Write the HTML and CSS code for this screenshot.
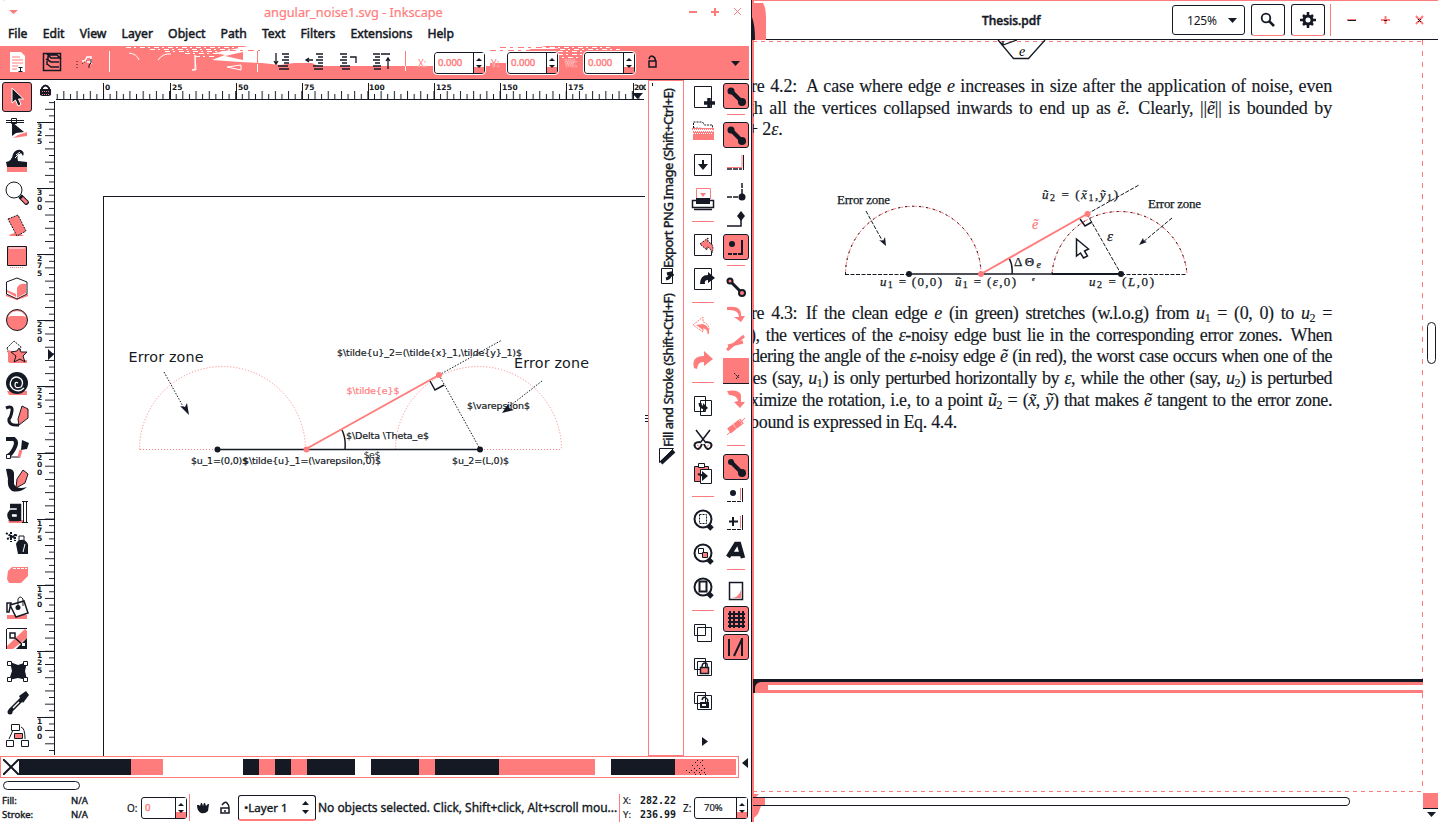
FILE: index.html
```html
<!DOCTYPE html>
<html lang="en">
<head>
<meta charset="utf-8">
<title>Inkscape and Thesis.pdf</title>
<link rel="stylesheet" href="styles.css">
</head>
<body>
<div class="desktop">
<section class="inkscape">
  <header class="titlebar">
    <svg class="tri" width="9" height="5"><path class="p" d="M0 0h9l-4.500 4z"/></svg>
    <span class="title">angular_noise1.svg - Inkscape</span>
    <svg class="winbtns" width="56" height="12"><path class="ps" stroke-width="2" d="M1 6h8M23 6h8M27 2v8"/><path class="ps" d="M46 2l7 7M53 2l-7 7"/></svg>
  </header>
  <nav class="menubar"><span>File</span><span>Edit</span><span>View</span><span>Layer</span><span>Object</span><span>Path</span><span>Text</span><span>Filters</span><span>Extensions</span><span>Help</span></nav>
  <div class="toolbar">
    <svg class="toolbar-art" width="752" height="33" viewBox="0 46 752 33">
      <path class="w" d="M248 46H540L560 49H530V63H490V66H318L312 63H294L280 65L262 63L240 62L212 60L225 55L215 53L230 50z"/>
      <path class="ws" stroke-dasharray="5 3 2 4" d="M126 47.500H248M150 49.500H235M165 51.500H225M185 53.500H220M195 56.500H215M530 51.500H600M530 54.500H585M540 57.500H580M560 49.500H620M550 47.500H610"/>
      <path class="ps" stroke-dasharray="6 4 3 5" d="M230 50.500H260M490 50.500H530M500 47.500H550"/>
      <path class="p" d="M225 56l18-4v8z"/>
      <path class="w" d="M10 52h11l4 4v16H10z"/><path class="ps" d="M12 57h8M12 60h11M12 63h11M12 66h6M12 69h5"/><path class="ds" d="M18.500 67.500h4M20.500 67v4M18.500 71.500h4"/>
      <path class="ds" stroke-width="1.500" d="M43.500 53.500h17v17h-17zM48 55h9l3 3h-9zM46 59l5 3h8M47 64l4 3h8M48 56v4l3 2M47 61v4"/>
      <path class="ws" stroke-width="1.500" d="M82 61h3l2-4h4v5h-4M91 58v6"/><path class="ds" stroke-dasharray="1 2" d="M77 61v9M82 64l5-4"/><path class="ds" d="M89 68v-3l2-2v-4"/>
      <path class="ws" d="M109.500 51v21M129 53q8 1 10 7M158 60q5-7 13-6M195 55v14l-3 1h4zM227 67l14 3v-5z"/>
      <path class="ps" d="M257.500 51v13"/><path class="ws" d="M257.500 64v8"/>
      <path class="ds" stroke-width="1.300" d="M276 53v11m-2-3l2 3 2-3M282 54h7M284 57h5M282 60h7M284 63h5M278 66h10M279 69h10M306 60h7m-4-2l-3 2 3 2M316 54h7M318 57h5M316 60h7M318 63h5M313 66h10M314 69h9M340 54h7M342 57h5M340 60h7M342 63h5M340 66h10M342 69h8M350 57h6v6M373 54h7M375 57h5M373 60h7M375 63h5M373 66h8M374 69h7M381 54h9M388 69V58m-2 3l2-3 2 3"/>
      <path class="ps" d="M405.500 51v15"/><path class="ws" d="M405.500 66v5"/>
      <path class="ds" stroke-width="1.500" d="M649 61h7v6h-7zM649 59q1-4 4-2.500t2 5"/>
      <path class="d" d="M731 61h9l-4.500 5z"/>
    </svg>
    <label class="fld fx">X:</label><span class="spin s1">0.000<i></i></span>
    <label class="fld fy">Y:</label><span class="spin s2">0.000<i></i></span>
    <label class="fld fw">W:</label><span class="spin s3">0.000<i></i></span>
  </div>

  <div class="main">
    <div class="toolbox">
      <b class="on"><svg viewBox="0 0 24 24"><path class="d" stroke="#fff" d="M7 3v15l3.500-3 2.500 6 3-1.500-2.500-5.500h5z"/></svg></b>
      <b><svg viewBox="0 0 24 24"><path class="ds" d="M1 3.500h18M1 5.500h18M6.500 1.500h5v5h-5z"/><path class="p" d="M13 18l9-3v4l-14 2z"/><path class="d" d="M7 5v14l4-3 8-1z"/></svg></b>
      <b><svg viewBox="0 0 24 24"><path class="p" d="M2 18h20v5H2z"/><path class="d" d="M1 13Q7 12 8 5Q11 0 16 1Q20 3 18 7L16 4Q11 6 13 12L22 13v5H2z"/><path class="ws" d="M11 6l4-3M10 9l4-4"/></svg></b>
      <b><svg viewBox="0 0 24 24"><circle class="wf" cx="9" cy="9" r="8"/><path class="ds" stroke-width="5" d="M15 15l8 8"/><path class="ps" stroke-width="3" d="M17 17l5 5"/></svg></b>
      <b><svg viewBox="0 0 24 24"><path class="p" d="M4 22l8-3 7 4H5z"/><path class="pf dots" d="M3 6l10-4 8 16-9 5z"/></svg></b>
      <b><svg viewBox="0 0 24 24"><path class="pf" d="M2.500 2.500h19v19h-19z"/><path class="ws" d="M4 4h16"/><path class="ps" stroke-dasharray="1 1" d="M5 23.500h14"/></svg></b>
      <b><svg viewBox="0 0 24 24"><path class="ps" stroke-width="2" d="M1 19l11 4 11-4"/><path class="wf" d="M1.500 6L12 2l10 4v12l-10 5-10.500-5z"/><path class="p" d="M12 12q2-5 9-4v9l-9 5zM2 14l9 4v3l-9-5z"/></svg></b>
      <b><svg viewBox="0 0 24 24"><circle class="pf" cx="12" cy="12" r="10.500"/><path class="w" d="M3 9Q6 3 12 3t9 6l-3-1H6z"/></svg></b>
      <b><svg viewBox="0 0 24 24"><path class="wf dots" d="M2 8l7-7 7 6-2 7-10 1z"/><path class="p" d="M3 10l10 3 4 7-14 2zM4 20h18v3H4z"/><path class="pf" d="M14 8l2 4 6 0-4 4 2 6-5-3-6 3 2-6-5-4 6-1z"/></svg></b>
      <b><svg viewBox="0 0 24 24"><path class="p" d="M2 19h20v4H4z"/><circle class="d" cx="12" cy="11" r="11"/><path class="ws" stroke-width="1.300" d="M13 11q-3-2-3 2t6 2q3-4 0-8-5-4-9 0-4 6 1 10 6 4 11-1"/></svg></b>
      <b><svg viewBox="0 0 24 24"><path class="ds" stroke-width="3" d="M1 4q7-3 6 3t-3 8q-1 7 10 6"/><path class="pf" d="M17 2l6 3v9l-9 7-1-6z"/></svg></b>
      <b><svg viewBox="0 0 24 24"><path class="ds" stroke-width="4" d="M1 3h8q4 3 0 10t-7 7"/><path class="wf" d="M1.500 18.500h4v4h-4z"/><path class="ds" d="M6 21h9"/><path class="d" d="M17 4l7 3-2 6-6 1z"/><path class="ps" stroke-width="3" d="M14 21l2-7"/></svg></b>
      <b><svg viewBox="0 0 24 24"><path class="d" d="M1 1q7-1 8 4v11q3 6 13 3-7 6-15 4-5-3-4-12z"/><path class="pf" d="M12 11l6-9 5 4-3 9-9 5z"/></svg></b>
      <b><svg viewBox="0 0 24 24"><path class="p" d="M3 20h16v3H4z"/><path class="ds" stroke-width="4.500" d="M5 6h9v15M14 12H6q-3 3 0 7h8"/><path class="ws" stroke-width="4" d="M20 2v20"/><path class="ds" d="M17 1.500h6M17 22.500h6M18.500 2v20M21.500 2v20"/></svg></b>
      <b><svg viewBox="0 0 24 24"><path class="ds" stroke-width="2" stroke-dasharray="2 1" d="M1 2l10 6M2 8l10-4M6 1v10M10 3v7"/><path class="wf" d="M14 5h5v5h-5z"/><path class="d" d="M11 13q2-5 8-4 5 3 4 7v7H13z"/><path class="ws" d="M20 13l-2 8"/></svg></b>
      <b><svg viewBox="0 0 24 24"><path class="p" d="M7 4h16v9l-7 7H4l-2-4 1-8z"/><path class="ws" stroke-dasharray="3 1" d="M8 5.500h14"/></svg></b>
      <b><svg viewBox="0 0 24 24"><path class="p" d="M2 20h20v4H2z"/><path class="wf" stroke-width="1.500" d="M2 8h4l-2 9h-2zM5 10l14-4 4 12-12 4z"/><path class="ds" d="M13 13V4q2-4 5 0v7"/><circle class="d" cx="13" cy="12.500" r="2.500"/></svg></b>
      <b><svg viewBox="0 0 24 24"><path class="ds" d="M1.500 2v20M2 1.500h20"/><path class="p" d="M20 2l2 2v7L8 22H2v-3z"/><path class="d" d="M22 11v11H11z"/><path class="ds" stroke-width="1.500" d="M5 6h5v5H5zM10 11l8 7"/><path class="w" d="M17 16h3v3h-3z"/></svg></b>
      <b><svg viewBox="0 0 24 24"><path class="d" d="M5 3l8 3 9-3-2 9 2 9-9-2-9 2 3-9z"/><path class="wf" d="M2.500 2.500h4v4h-4zM18.500 2.500h4v4h-4zM2.500 18.500h4v4h-4zM18.500 18.500h4v4h-4z"/></svg></b>
      <b><svg viewBox="0 0 24 24"><path class="ds" stroke-width="4.500" d="M5 20L18 7"/><path class="d" d="M14 5l7-5 3 4-6 8z"/><path class="ws" stroke-width="1.500" d="M8 17l6-6"/><circle class="d" cx="5" cy="21" r="2.500"/></svg></b>
      <b><svg viewBox="0 0 24 24"><path class="ds" d="M8 7L4 16M16 4q4 1 4 12"/><path class="wf" d="M6.500 1.500h8v6h-8zM1.500 17.500h7v6h-7zM16.500 17.500h7v6h-7z"/><path class="pf" d="M9.500 10.500h8v5h-8z"/></svg></b>
    </div>

    <svg class="canvas" width="612" height="676" viewBox="36 80 612 676">
      <defs>
        <pattern id="hticks" x="103" y="0" width="13.220" height="20" patternUnits="userSpaceOnUse"><path class="d" d="M0 11h1v9H0zM6.600 14h1v6h-1z"/></pattern>
        <pattern id="vticks" x="0" y="122" width="20" height="13.220" patternUnits="userSpaceOnUse"><path class="d" d="M6 0h9v1H6zM10 6.600h5v1h-5z"/></pattern>
      </defs>
      <path class="d" d="M40 89h11v6l-2 1h-7l-2-1z"/>
      <path class="ds" stroke-width="2" d="M42 90v-2q3.500-5 7 0v2"/><path class="ps" stroke-dasharray="1 1" d="M42 91.500h8M42 94.500h8"/>
      <g transform="translate(0 80)"><rect x="56" y="0" width="588" height="20" fill="url(#hticks)"/></g>
      <g transform="translate(39 0)"><rect x="0" y="102" width="15" height="652" fill="url(#vticks)"/></g>
      <g shape-rendering="crispEdges"><path class="ds" d="M56 99.500h588M54.500 101v654M103.500 83v16M170.500 83v16M236.500 83v16M302.500 83v16M368.500 83v16M434.500 83v16M500.500 83v16M566.500 83v16M633.500 83v16M37 122.500h17M37 188.500h17M37 254.500h17M37 320.500h17M37 386.500h17M37 453.500h17M37 519.500h17M37 585.500h17M37 651.500h17M37 717.500h17M103.500 756V196.500H645"/></g>
      <path class="d" d="M632 93h11l-5.500 6zM48 349v11l6-5.500z"/>
      <g class="rl"><text x="105" y="90">0</text><text x="172" y="90">25</text><text x="238" y="90">50</text><text x="304" y="90">75</text><text x="369" y="90">100</text><text x="436" y="90">125</text><text x="502" y="90">150</text><text x="568" y="90">175</text><text x="634" y="90" textLength="14">200</text></g>
      <path class="w" d="M646 80h2v20h-2z"/>
      <g class="rl"><text x="37 37 37" y="129 136 144">325</text><text x="37 37 37" y="195 202 210">300</text><text x="37 37 37" y="261 268 276">275</text><text x="37 37 37" y="327 334 342">250</text><text x="37 37 37" y="393 400 408">225</text><text x="37 37 37" y="460 467 475">200</text><text x="37 37 37" y="526 533 541">175</text><text x="37 37 37" y="592 599 607">150</text><text x="37 37 37" y="658 665 673">125</text><text x="37 37 37" y="724 731 739">100</text></g>
      <path class="ds" d="M645 415.500h3M645 418.500h3M645 421.500h3"/>
      <g class="ps" stroke-dasharray="1 2"><path d="M139.500 449.500A83 83 0 0 1 305.500 449.500M140 449.500h78M395.500 449.500A83 83 0 0 1 561.500 449.500M481 449.500h81"/></g>
      <path class="ds" stroke-dasharray="1.500 1.500" d="M439 375l63-35M439 375l41 74M164 372l21 38M542 381l-36 28"/>
      <path class="ds" stroke-width="1.500" d="M218 449.500h262M430 381l5 9 9-5M342 430q4 8 3 19"/>
      <path class="ps" stroke-width="2" d="M306 449L439 375"/>
      <circle class="p" cx="306.500" cy="449.500" r="3"/><circle class="p" cx="439" cy="375" r="3"/>
      <circle class="d" cx="217.500" cy="449.500" r="3"/><circle class="d" cx="480" cy="449.500" r="3"/>
      <path class="d" d="M180 406l5 1 2-4 2 12zM502 413l6-9 1 4 5 2z"/>
      <g class="dj"><text class="big" x="128.500" y="362" textLength="75">Error zone</text><text class="big" x="514" y="367.500" textLength="75">Error zone</text>
      <text x="337" y="356" textLength="185">$\tilde{u}_2=(\tilde{x}_1,\tilde{y}_1)$</text>
      <text class="red" x="346.500" y="394" textLength="53">$\tilde{e}$</text>
      <text x="467" y="409" textLength="63">$\varepsilon$</text>
      <text x="346" y="439" textLength="83">$\Delta \Theta_e$</text>
      <text x="363.500" y="458" textLength="17" class="thin">$e$</text>
      <text x="191" y="464" textLength="57">$u_1=(0,0)$</text>
      <text x="243" y="464" textLength="138">$\tilde{u}_1=(\varepsilon,0)$</text>
      <text x="452" y="464" textLength="57">$u_2=(L,0)$</text></g>
    </svg>

    <div class="dock">
      <svg width="34" height="674" viewBox="649 81 34 674">
        <text class="tab" transform="translate(673 268) rotate(-90)" textLength="180">Export PNG Image (Shift+Ctrl+E)</text>
        <text class="tab" transform="translate(673 447) rotate(-90)" textLength="154">Fill and Stroke (Shift+Ctrl+F)</text>
        <path class="wf" d="M661.500 268.500h11v15h-11zM659.500 448.500h14l-14 14z"/>
        <path class="ds" stroke-width="3" d="M666 279q5-1 4-6m-3 1l4-1 2 3"/><path class="ds" stroke-width="4" d="M661 463l13-12"/><path class="d" d="M652 83h1v3h-1z"/>
      </svg>
    </div>

    <div class="commands">
      <b><svg viewBox="0 0 24 24"><path class="wf" d="M3.500 1.500h17v21h-17z"/><path class="ds" stroke-width="3.500" d="M13 18h11M18 13v10"/></svg></b>
      <b><svg viewBox="0 0 24 24"><path class="wf dots" d="M2.500 9V3h9l2 3h8v4z"/><path class="p" d="M1 9h22v2H1zM2 12h21v9H2z"/><path class="ws" stroke-dasharray="1 1" d="M2 10.500h20M3 12.500h20M2 14.500h20"/></svg></b>
      <b><svg viewBox="0 0 24 24"><path class="wf" d="M3.500 1.500h17v21h-17z"/><path class="ds" stroke-width="2" d="M12 7v8"/><path class="d" d="M7 11h10l-5 6z"/></svg></b>
      <b><svg viewBox="0 0 24 24"><path class="ps" d="M5.500 12V1.500h14V12"/><path class="p" d="M9 6h6l-3 4z"/><path class="ds" stroke-width="1.500" d="M1.500 13.500h21v7h-21zM3 22.500h18"/><path class="d" d="M5 11h14v6H5z"/></svg></b>
      <hr>
      <b><svg viewBox="0 0 24 24"><path class="wf" d="M3.500 1.500h17v21h-17z"/><path class="pf dots" d="M9 11l8-6v4q7 2 4 11-2-6-5-6v3z"/></svg></b>
      <b><svg viewBox="0 0 24 24"><path class="wf" d="M3.500 1.500h17v21h-17z"/><path class="d" d="M9 17q0-9 8-9V5l7 6-7 5v-3q-4 0-3 4z"/></svg></b>
      <hr>
      <b><svg viewBox="0 0 24 24"><path class="ps" stroke-dasharray="2 1" d="M2 11l10-8v5q8 2 5 12-1-6-5-6v4z"/><path class="p" d="M5 11l7-1q7 2 6 11-2-7-6-7v2z"/></svg></b>
      <b><svg viewBox="0 0 24 24"><path class="p" d="M3 20Q0 8 13 8V3l9 8-9 7v-4q-6-1-7 7z"/></svg></b>
      <hr>
      <b><svg viewBox="0 0 24 24"><path class="wf" d="M3.500 2.500h11v15h-11zM9.500 6.500h11v15h-11z"/><path class="ds" stroke-width="3" d="M9 9q0 5 6 5"/><path class="d" d="M12 9l5 5-5 4z"/></svg></b>
      <b><svg viewBox="0 0 24 24"><path class="ds" stroke-width="1.500" d="M5 2l10 13M19 2L9 15"/><path class="ds" stroke-width="2" d="M9 14q-7 0-5 5 4 5 7-3M15 14q7 0 5 5-4 5-7-3"/><path class="ps" d="M6 17l3 2M18 17l-3 2"/></svg></b>
      <b><svg viewBox="0 0 24 24"><path class="pf" d="M3.500 4.500h14v15h-14z"/><path class="wf" d="M7.500 1.500h6v4h-6zM9.500 7.500h11v14h-11z"/><path class="ds" stroke-width="2" d="M7 12l6 2"/><path class="d" d="M11 9l6 5-6 5z"/></svg></b>
      <hr>
      <b><svg viewBox="0 0 24 24"><path class="ds" stroke-width="5" d="M16 16l5 5"/><circle class="mag" cx="12" cy="11" r="8.500"/><path class="ds dots" d="M8.500 6.500h7v9h-7z"/></svg></b>
      <b><svg viewBox="0 0 24 24"><path class="ds" stroke-width="5" d="M16 16l5 5"/><circle class="mag" cx="12" cy="11" r="8.500"/><path class="wf" d="M7.500 6.500h5v5h-5z"/><path class="pf" d="M11.500 10.500h5v5h-5z"/></svg></b>
      <b><svg viewBox="0 0 24 24"><path class="ds" stroke-width="5" d="M16 16l5 5"/><circle class="mag" cx="12" cy="11" r="8.500"/><path class="wf2" d="M8.500 5.500h7v10h-7z"/></svg></b>
      <hr>
      <b><svg viewBox="0 0 24 24"><path class="wf" d="M3.500 2.500h11v11h-11zM6.500 5.500h14v14h-14z"/></svg></b>
      <b><svg viewBox="0 0 24 24"><path class="wf" d="M3.500 2.500h11v11h-11zM6.500 5.500h14v14h-14z"/><path class="pf" stroke-width="1.500" d="M9.500 11.500h8v6h-8z"/><path class="ds" stroke-width="1.500" d="M11 11q0-4 3-4t2 4"/></svg></b>
      <b><svg viewBox="0 0 24 24"><path class="wf" d="M3.500 2.500h11v11h-11zM6.500 5.500h14v14h-14z"/><path class="d" d="M9 12h9v6H9z"/><path class="w" d="M11 14h4v2h-4z"/><path class="ds" stroke-width="1.500" d="M11 10q1-4 4-2t1 4"/></svg></b>
      <svg class="more" width="6" height="9"><path class="d" d="M0 0l6 4.500-6 4.500z"/></svg>
    </div>

    <div class="snap">
      <b class="on"><svg viewBox="0 0 24 24"><path class="ds" stroke-width="4" d="M6 6l12 12"/><circle class="d" cx="7" cy="7" r="3.500"/><circle class="d" cx="18" cy="18" r="4"/></svg></b>
      <hr class="first">
      <b class="on"><svg viewBox="0 0 24 24"><path class="ds" stroke-width="4" d="M6 6l12 12"/><circle class="d" cx="7" cy="7" r="3.500"/><circle class="d" cx="18" cy="18" r="4"/></svg></b>
      <b><svg viewBox="0 0 24 24"><path class="ps" d="M3 16.500h15V4"/><path class="ds" stroke-width="1.500" stroke-dasharray="5 1" d="M3 18h15"/><path class="ds" d="M19.500 19V4"/></svg></b>
      <b><svg viewBox="0 0 24 24"><path class="ds" stroke-width="1.500" stroke-dasharray="5 1" d="M3 18h15V4"/><circle class="d" cx="18" cy="18" r="3.500"/></svg></b>
      <b><svg viewBox="0 0 24 24"><path class="ds" stroke-width="1.500" d="M3 19h14V8"/><path class="d" d="M17 4l4 5-4 5-4-5z"/></svg></b>
      <b class="on"><svg viewBox="0 0 24 24"><circle class="d" cx="8" cy="9" r="3"/><path class="ds" stroke-width="2" stroke-dasharray="4 1" d="M4 19h14"/><path class="ds" stroke-width="2" d="M18 20V5"/></svg></b>
      <hr>
      <b><svg viewBox="0 0 24 24"><path class="ds" stroke-width="3" d="M6 6l12 12"/><circle class="pf" stroke-width="2" cx="6" cy="6" r="2.500"/><circle class="pf" stroke-width="2" cx="18" cy="18" r="3"/></svg></b>
      <b><svg viewBox="0 0 24 24"><path class="p" d="M3 4q15-2 14 9h4l-4 6-7-5h5q0-8-12-7z"/></svg></b>
      <b><svg viewBox="0 0 24 24"><path class="ps" stroke-width="3" d="M3 19L20 5M4 15l15-4"/></svg></b>
      <b class="blank"><svg viewBox="0 0 24 24"><path class="ds dots" d="M10 14l5 5M15 16l-3 4"/></svg></b>
      <b><svg viewBox="0 0 24 24"><path class="p" d="M3 4q12-2 14 4v7h4l-5 6-6-6 4-1q-1-6-9-6z"/></svg></b>
      <b><svg viewBox="0 0 24 24"><path class="ps" stroke-width="6" stroke-dasharray="7 .5" d="M5 16L18 6"/><path class="ps" d="M3 20L21 3"/></svg></b>
      <hr>
      <b class="on"><svg viewBox="0 0 24 24"><path class="ds" stroke-width="4" d="M6 6l12 12"/><circle class="d" cx="7" cy="7" r="3"/><circle class="d" cx="18" cy="18" r="4"/></svg></b>
      <b><svg viewBox="0 0 24 24"><path class="ps" d="M16.500 5v12"/><circle class="d" cx="9" cy="10" r="3"/><path class="ds" stroke-dasharray="4 1" d="M3 18.500h15"/><path class="ds" d="M18.500 19V5"/></svg></b>
      <b><svg viewBox="0 0 24 24"><path class="ps" d="M16.500 5v12"/><path class="ds" stroke-width="2" d="M9 6v9M5 10.500h9"/><path class="ds" stroke-dasharray="4 1" d="M3 18.500h15"/><path class="ds" d="M18.500 19V4"/></svg></b>
      <b><svg viewBox="0 0 24 24"><path class="ds" stroke-width="4.500" d="M4 18l8-13h3l4 14M7 15h11"/></svg></b>
      <hr>
      <b><svg viewBox="0 0 24 24"><path class="wf" stroke-width="1.500" d="M5.500 3.500h13v17h-13z"/><path class="p" d="M8 19q7-1 9-8v8z"/></svg></b>
      <b class="on"><svg viewBox="0 0 24 24"><path class="ds" stroke-width="2" d="M6 4v17M10 4v17M15 4v17M19 4v17M4 7h17M4 11h17M4 15h17M4 19h17"/></svg></b>
      <b class="on"><svg viewBox="0 0 24 24"><path class="ds" stroke-width="2" d="M5 4v17M18 3v18M18 4l-8 17"/></svg></b>
    </div>
  </div>

  <div class="palette"><div class="swatches"><svg width="16" height="16"><path class="ds" stroke-width="2" d="M0 0l16 16M16 0L0 16"/></svg><i class="k n7"></i><i class="r n2"></i><i class="n5"></i><i class="k n1"></i><i class="r n1"></i><i class="k n1"></i><i class="r n1"></i><i class="k n3"></i><i class="n1"></i><i class="k n3"></i><i class="r n1"></i><i class="k n4"></i><i class="r n6"></i><i class="n1"></i><i class="k n4"></i><svg class="r" width="61" height="16"><path class="ds" stroke-dasharray="1 4" d="M20 3.500h10M17 6.500h13M11 11.500h20M19 9.500h13M14 13.500h16M22 1.500h9M20 15.500h12"/></svg></div><svg class="parrow" width="6" height="10"><path class="d" d="M6 0v10L0 5z"/></svg></div>
  <div class="hscroll"><i></i></div>
  <footer class="status">
    <div class="fs"><span>Fill:</span><span>N/A</span><span>Stroke:</span><span>N/A</span></div>
    <span class="op">O:</span><span class="spin so">0<i></i></span>
    <svg class="locks" width="50" height="28" viewBox="188 794 50 28"><path class="ps" d="M190.500 794v27"/><path class="d" d="M198 805h2l1 1 1-3h1l1 3 1-3h1l1 3 2-2h1l-1 7q-3 3-7 2-4-2-4-8z"/><path class="ds" stroke-width="1.500" d="M222 808h8v5h-8zM223 805q3-4 5-2t2 5M225 811h2"/></svg>
    <span class="layer">•Layer 1<svg width="7" height="13"><path class="d" d="M0 4l3.500-4L7 4zM0 9l3.500 4L7 9z"/></svg></span>
    <span class="msg">No objects selected. Click, Shift+click, Alt+scroll mou...</span>
    <div class="xy"><span>X:</span><em>282.22</em><span>Y:</span><em>236.99</em></div>
    <span class="z">Z:</span><span class="spin sz">70%<i></i></span>
  </footer>
</section>

<section class="viewer">
  <header class="vbar">
    <svg class="corner" width="14" height="39"><path class="p" d="M0 2h11q3 5 3 15v22H0z"/><path class="d" d="M0 16q3 8 3 23H0z"/></svg>
    <span class="vtitle">Thesis.pdf</span>
    <span class="zoom">125%<svg width="9" height="5"><path class="d" d="M0 0h9L4.500 5z"/></svg></span>
    <span class="vb"><svg width="16" height="16"><circle cx="6" cy="6" r="4.300" fill="none" stroke="#141924" stroke-width="1.800"/><path class="ds" stroke-width="2.500" d="M9 9l5 5"/></svg></span>
    <span class="vb"><svg width="16" height="16"><circle cx="8" cy="8" r="4" fill="none" stroke="#141924" stroke-width="3"/><path class="ds" stroke-width="2.500" d="M8 0v3M8 13v3M0 8h3M13 8h3M3 3l2 2M11 11l2 2M3 13l2-2M11 5l2-2"/></svg></span>
    <svg class="vwin" width="98" height="32"><path class="ps" d="M.5 0v32"/><path class="ps" stroke-width="2" d="M17 16h9M51 16h9M55.500 12v8M86 12l7 8M93 12l-7 8"/><path class="ds" d="M18 16.500h8M54 16.500h3M88 15l3 3M91 15l-3 3"/></svg>
  </header>
  <div class="vbody">
    <div class="page">
      <svg class="topfig" width="60" height="24" viewBox="990 40 60 24"><path class="ds" stroke-width="1.300" d="M998 40l15.500 18.500h15L1045 40M998 40l5 5 14-5M1003 45v-4"/><text class="it" x="1019" y="56" font-size="14">e</text></svg>
      <div class="lines cap1">
        <p class="c1">re 4.2:&ensp;A case where edge <i>e</i> increases in size after the application of noise, even</p>
        <p class="c2">gh all the vertices collapsed inwards to end up as <i>ẽ</i>.&ensp;Clearly, ||<i>ẽ</i>|| is bounded by</p>
        <p class="c3">+ 2<i>ε</i>.</p>
      </div>
      <svg class="fig" width="400" height="130" viewBox="820 170 400 130">
        <g class="ps" stroke-dasharray="5 2"><path d="M845.500 274A67.700 67.700 0 0 1 981 274M1052 274A67.700 67.700 0 0 1 1187 274"/></g>
        <g class="ds" stroke-dasharray="2 5"><path d="M845.500 274A67.700 67.700 0 0 1 981 274M1052 274A67.700 67.700 0 0 1 1187 274"/></g>
        <path class="ds" stroke-dasharray="4 1.500" d="M845 274.500h64M1121 274.500h66M1087 214l52-29M1087 214l34 60M866 211l17 31M1172 218l-30 25"/>
        <path class="ds" stroke-width="1.500" d="M909 274h212M1080 219l5 7 7-4M1009 258q4 7 3 16"/><path class="ds" stroke-width="2" d="M1052 274h69"/>
        <path class="ps" stroke-width="2" d="M981 274l106-60"/>
        <circle class="p" cx="981" cy="274" r="3"/><circle class="p" cx="1087.500" cy="214" r="3"/><circle class="d" cx="909" cy="274" r="3"/><circle class="d" cx="1121" cy="274" r="3"/>
        <path class="d" d="M879 240l4 1 2-4 1 9zM1139 245l4-7 1 3 3 1z"/>
        <g class="sf"><text x="837" y="204" textLength="53">Error zone</text><text x="1148" y="208" textLength="53">Error zone</text>
        <text x="1042" y="199" textLength="76"><tspan class="it">ũ</tspan><tspan class="sub" dy="2">2</tspan><tspan dy="-2"> = (</tspan><tspan class="it">x̃</tspan><tspan class="sub" dy="2">1</tspan><tspan dy="-2">,</tspan><tspan class="it">ỹ</tspan><tspan class="sub" dy="2">1</tspan><tspan dy="-2">)</tspan></text>
        <text class="it red" x="1032" y="229" font-size="14">ẽ</text><text class="it" x="1107" y="241" font-size="15">ε</text>
        <text x="1014" y="266" textLength="27">ΔΘ<tspan class="it sub" dy="2">e</tspan></text>
        <text x="880" y="286" textLength="62"><tspan class="it">u</tspan><tspan class="sub" dy="2">1</tspan><tspan dy="-2"> = (0,0)</tspan></text>
        <text x="955" y="286" textLength="61"><tspan class="it">ũ</tspan><tspan class="sub" dy="2">1</tspan><tspan dy="-2"> = (</tspan><tspan class="it">ε</tspan>,0)</text>
        <text x="1089" y="286" textLength="65"><tspan class="it">u</tspan><tspan class="sub" dy="2">2</tspan><tspan dy="-2"> = (</tspan><tspan class="it">L</tspan>,0)</text>
        <text class="it tiny" x="1032" y="281">e</text></g>
        <path class="wf" stroke-width="1.500" d="M1076.500 239v17l4-3 3 5 4-2-3-5 4-2z"/>
      </svg>
      <div class="lines cap2">
        <p class="d1">re 4.3:&ensp;If the clean edge <i>e</i> (in green) stretches (w.l.o.g) from <i>u</i><sub>1</sub> = (0, 0) to <i>u</i><sub>2</sub> =</p>
        <p class="d2">), the vertices of the <i>ε</i>-noisy edge bust lie in the corresponding error zones.&ensp;When</p>
        <p class="d3">dering the angle of the <i>ε</i>-noisy edge <i>ẽ</i> (in red), the worst case occurs when one of the</p>
        <p class="d4">ces (say, <i>u</i><sub>1</sub>) is only perturbed horizontally by <i>ε</i>, while the other (say, <i>u</i><sub>2</sub>) is perturbed</p>
        <p class="d5">ximize the rotation, i.e, to a point <i>ũ</i><sub>2</sub> = (<i>x̃</i>, <i>ỹ</i>) that makes <i>ẽ</i> tangent to the error zone.</p>
        <p class="d6">bound is expressed in Eq. 4.4.</p>
      </div>
    </div>
    <div class="vscroll"><i></i></div>
  </div>
  <div class="gap"><i></i></div>
  <div class="page2"></div>
  <div class="vfoot"><svg width="12" height="29"><path class="p" d="M0 2h6l-3 3h9v9H8l-3 8-4 4H0z"/><path class="ds" d="M0 5.500h12M0 13.500h12"/></svg><i></i><svg width="15" height="29"><path class="p" d="M0 1h15v15H0z"/><path class="ds" d="M0 16.500h15"/><path class="d" d="M4 20h9l-4.500 5z"/></svg></div>
</section>
</div>
</body>
</html>
```
FILE: styles.css
```css
* { box-sizing: border-box; }
body { margin: 0; width: 1438px; height: 822px; overflow: hidden; background: #fff; color: #141924; font: 12px "Noto Sans", sans-serif; }
svg { display: block; flex: none; overflow: hidden; }
.p { fill: #ff7c7c; stroke: none; }
.d { fill: #141924; }
.w { fill: #fff; }
.ps { fill: none; stroke: #ff7c7c; }
.ds { fill: none; stroke: #141924; }
.ws { fill: none; stroke: #fff; }
.wf { fill: #fff; stroke: #141924; }
.wf2 { fill: #fff; stroke: #141924; stroke-width: 2; }
.pf { fill: #ff7c7c; stroke: #141924; }
.mag { fill: #fff; stroke: #141924; stroke-width: 2; }
.dots { stroke-dasharray: 2 1; }
.desktop { display: flex; height: 822px; }

.inkscape { width: 754px; flex: none; display: flex; flex-direction: column; border-right: 2px solid #ff7c7c; box-shadow: inset -1px 0 #141924; border-top-left-radius: 6px; }
.titlebar { display: flex; height: 24px; align-items: center; color: #ff7c7c; padding-left: 9px; }
.title { width: 180px; margin-left: 246px; font-size: 12.7px; white-space: nowrap; line-height: 24px; -webkit-text-stroke: .2px #ff7c7c; }
.winbtns { margin-left: 244px; }
.menubar { display: flex; height: 22px; padding-left: 8px; line-height: 19px; font-size: 12.2px; -webkit-text-stroke: .5px #141924; gap: 15.2px; }
.toolbar { height: 34px; width: 749px; background: #ff7c7c; border-bottom: 1px solid #141924; position: relative; display: flex; align-items: center; font-size: 10px; }
.toolbar-art { position: absolute; left: 0; top: 0; }
.fld { position: relative; color: #ff7c7c; width: 16px; text-shadow: 0 0 1px #fff, 0 0 1px #fff; }
.fx { margin-left: 418px; }
.fy, .fw { margin-left: 6px; }
.fw { width: 19px; margin-left: 7px; }
.spin { position: relative; border: 1px solid #141924; border-radius: 3px; width: 51px; height: 22px; background: #fff; line-height: 20px; padding-left: 3px; flex: none; color: #ff7c7c; font-size: 9.5px; -webkit-text-stroke: .4px #ff7c7c; }
.toolbar .spin { outline: 1px solid #fff; }
.spin i { position: absolute; right: 0; top: 0; width: 11px; height: 20px; border-left: 1px solid #141924; background: linear-gradient(#fff 68%, #ff7c7c 68%); }
.spin i::before, .spin i::after { content: ""; position: absolute; left: 2px; border: 3px solid transparent; }
.spin i::before { top: 2px; border-bottom-color: #141924; }
.spin i::after { top: 12px; border-top-color: #141924; }

.main { display: flex; height: 676px; }
.toolbox { width: 36px; padding: 1px 0 0 2px; display: flex; flex-direction: column; }
.toolbox b { width: 30px; height: 31.900px; display: flex; align-items: center; justify-content: center; }
.toolbox b.on { height: 30px; margin: 1px 0 .9px; border: 1px solid #141924; border-radius: 3px; background: #ff7c7c; }
.toolbox svg { width: 24px; height: 24px; }
.canvas { width: 612px; }
.rl { font: bold 7.500px "DejaVu Sans", sans-serif; fill: #141924; }
.dj { font: 9.500px "DejaVu Sans", sans-serif; fill: #141924; stroke: #141924; stroke-width: .2px; }
.dj .big { font-size: 14.300px; stroke-width: 0; }
.dj .thin { stroke-width: 0; }
.dj .red { fill: #ff7c7c; stroke: #ff7c7c; }
.dock { width: 36px; border: 1px solid #ff7c7c; }
.tab { font: 13px "Noto Sans", sans-serif; fill: #141924; stroke: #141924; stroke-width: .4px; }
.commands { width: 38px; display: flex; flex-direction: column; align-items: center; }
.commands b { height: 34px; display: flex; align-items: center; }
.commands svg, .snap svg { width: 24px; height: 24px; }
hr { width: 22px; height: 1px; margin: 5.300px 0 6px; border: 0; background: #ff7c7c; flex: none; }
.commands .more { width: 6px; height: 9px; margin: 18px 0 0 3px; }
.snap { width: 28px; padding-top: 2px; display: flex; flex-direction: column; align-items: center; }
.snap b { height: 26px; width: 26px; margin: 1px 0; display: flex; flex: none; align-items: center; justify-content: center; }
.snap hr { width: 18px; margin: 4px 0 7px; }
.snap hr.first { margin-bottom: 6px; }
.snap .on { border: 1px solid #141924; border-radius: 3px; background: #ff7c7c; }
.snap .blank { background: #ff7c7c; border-bottom: 1px solid #141924; }

.palette { display: flex; height: 22px; align-items: center; }
.swatches { display: flex; width: 739px; height: 22px; border: 1px solid #ff7c7c; padding: 2px; }
.swatches i { height: 16px; flex: none; }
.k { background: #141924; }
.r { background: #ff7c7c; }
.n1 { width: 16px; } .n2 { width: 32px; } .n3 { width: 48px; } .n4 { width: 64px; } .n5 { width: 80px; } .n6 { width: 96px; } .n7 { width: 112px; }
.parrow { margin-left: 3px; margin-bottom: 8px; }
.hscroll { height: 15px; padding: 3px; }
.hscroll i { display: block; width: 77px; height: 9px; border: 1px solid #141924; border-radius: 5px; }
.status { display: flex; height: 29px; align-items: center; }
.fs { display: grid; grid-template-columns: 69px 55px; padding-left: 2px; font-size: 9.500px; line-height: 14px; -webkit-text-stroke: .4px #141924; margin-right: 1px; }
.op { width: 14px; font-size: 10px; -webkit-text-stroke: .2px #141924; }
.so { width: 46px; }
.layer { width: 78px; height: 26px; border: 1px solid #141924; border-bottom: 2px solid #ff7c7c; border-radius: 3px; display: flex; align-items: center; justify-content: space-between; padding: 0 6px 0 5px; font-size: 11.500px; -webkit-text-stroke: .4px #141924; margin-left: 1px; }
.msg { margin-left: 2px; width: 301px; font-size: 12px; letter-spacing: -.04px; white-space: nowrap; -webkit-text-stroke: .35px #141924; }
.xy { display: grid; grid-template-columns: 17px 43px; border-left: 1px solid #ff7c7c; padding-left: 3px; font-size: 9.500px; line-height: 14px; -webkit-text-stroke: .2px #141924; }
.xy em { font: bold 10px/14px "DejaVu Sans Mono", monospace; -webkit-text-stroke: 0; }
.z { width: 11px; font-size: 10px; -webkit-text-stroke: .2px #141924; }
.sz { width: 54px; padding-left: 9px; color: #141924; -webkit-text-stroke: .2px #141924; }

.viewer { flex: 1; min-width: 0; display: flex; flex-direction: column; border-top: 1px solid #ff7c7c; margin-left: -1px; }
.vbar { height: 39px; display: flex; align-items: center; border-bottom: 1px solid #141924; margin-left: -1px; }
.vtitle { font: 500 12px "Noto Sans", sans-serif; -webkit-text-stroke: .5px #141924; width: 65px; margin-left: 216px; }
.zoom { margin-left: 125px; width: 73px; height: 30px; border: 1px solid #141924; border-radius: 3px; display: flex; align-items: center; padding-left: 14px; font-size: 12px; letter-spacing: -.2px; }
.zoom svg { margin-left: auto; margin-right: 7px; }
.vb { width: 34px; height: 32px; border: 1px solid #141924; border-bottom-color: #ff7c7c; border-radius: 3px; display: flex; align-items: center; justify-content: center; margin-left: 6px; }
.vwin { margin-left: 5px; }
.vbody { display: flex; height: 639px; }
.page { width: 670px; overflow: hidden; background: repeating-linear-gradient(90deg, #ff7c7c 0 4px, transparent 4px 8px) 0 1px / 100% 1px no-repeat, repeating-linear-gradient(#ff7c7c 0 5px, transparent 5px 11px) 100% 0 / 1px 100% no-repeat; }
.topfig { margin-left: 237px; }
.lines { font: 18px/22px "Liberation Serif", serif; width: 579px; letter-spacing: -.4px; -webkit-text-stroke: .15px #141924; }
.lines p { margin: 0 0 0 -2px; height: 21.700px; white-space: nowrap; text-align: justify; text-align-last: justify; }
.cap1 { margin-top: 11px; letter-spacing: -.15px; }
.cap1 .c2 { margin-left: -8px; }
.cap1 .c3 { margin-left: -5px; text-align-last: left; }
.fig { margin: 30px 0 2px 67px; }
.cap2 .d2 { margin-left: -3px; }
.cap2 .d4 { margin-left: -8px; }
.cap2 .d5, .cap2 .d6 { margin-left: -3px; }
.cap2 .d3, .cap2 .d4 { letter-spacing: -.48px; }
.cap2 .d6 { text-align-last: left; letter-spacing: -.3px; }
.lines sub { font-size: 12px; line-height: 0; vertical-align: -3px; }
.it { font-family: "Liberation Serif", serif; font-style: italic; }
.sf { font: 13px "Liberation Serif", serif; fill: #141924; stroke: #141924; stroke-width: .25px; }
.sub { font-size: 10px; }
.tiny { font-size: 6px; }
.sf .red { fill: #ff7c7c; stroke: #ff7c7c; }
.vscroll { width: 15px; padding: 282px 2px 0 4px; }
.vscroll i { display: block; height: 42px; width: 9px; border: 1px solid #141924; border-radius: 5px; }
.gap { height: 14px; width: 670px; background: #141924; padding: 3px 0 0 2px; }
.gap i { display: block; height: 11px; border: solid #ff7c7c; border-width: 3px 0 3px 13px; background: #fff; border-radius: 6px 0 0 0; }
.page2 { height: 99px; width: 670px; background: repeating-linear-gradient(90deg, #ff7c7c 0 4px, transparent 4px 8px) 0 100% / 100% 1px no-repeat, repeating-linear-gradient(#ff7c7c 0 5px, transparent 5px 11px) 100% 0 / 1px 100% no-repeat; }
.vfoot { display: flex; height: 30px; }
.vfoot i { margin: 5px 73px 0 0; width: 585px; height: 9px; border: 1px solid #141924; border-left: 0; border-radius: 0 5px 5px 0; flex: none; }
```
